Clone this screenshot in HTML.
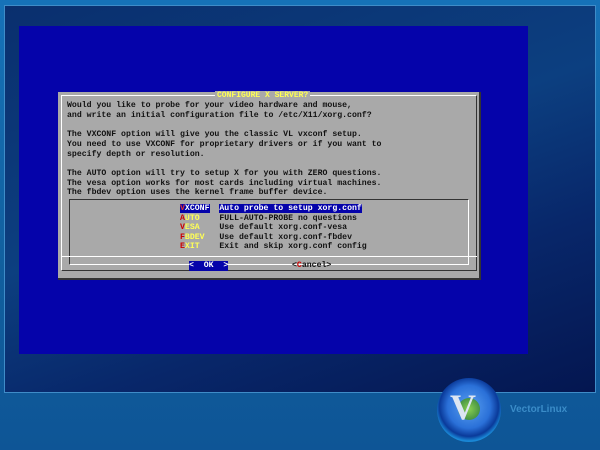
<!DOCTYPE html>
<html><head><style>
body{margin:0;width:600px;height:450px;overflow:hidden;background:linear-gradient(180deg,#1672b8 0%,#115f9e 60%,#0e5596 100%);position:relative;font-family:"Liberation Mono",monospace;}
.frame{position:absolute;left:4px;top:5px;width:590px;height:386px;border:1px solid #3f8cc8;background:linear-gradient(160deg,#0a2f6e 0%,#0c3f80 45%,#08276a 70%,#041650 100%);}
.scr{position:absolute;left:19px;top:26px;width:509px;height:328px;background:#0503aa;}
.dlg{position:absolute;left:58px;top:92px;width:421px;height:186px;background:#a9a9a9;border-right:2px solid #333;border-bottom:2px solid #333;}
.t{position:absolute;font-size:8.2px;font-weight:bold;color:#111;white-space:pre;line-height:9.7px;}
.ob{position:absolute;border:1px solid #fff;border-right-color:#333;border-bottom-color:#333;}
.title{position:absolute;left:157px;top:-1px;color:#ffff55;background:#a9a9a9;font-size:8px;font-weight:bold;padding:0 2px;}
.y{color:#ffff55}.r{color:#c00}
</style></head><body>
<div class="frame"></div>
<div class="scr"></div>
<div class="dlg">
 <div class="ob" style="left:3px;top:3px;width:414px;height:174px;"></div>
 <div class="title">CONFIGURE X SERVER?</div>
 <div class="t" style="left:9px;top:9px">Would you like to probe for your video hardware and mouse,
and write an initial configuration file to /etc/X11/xorg.conf?

The VXCONF option will give you the classic VL vxconf setup.
You need to use VXCONF for proprietary drivers or if you want to
specify depth or resolution.

The AUTO option will try to setup X for you with ZERO questions.
The vesa option works for most cards including virtual machines.
The fbdev option uses the kernel frame buffer device.</div>
 <div class="ob" style="left:11px;top:107px;width:398px;height:64px;border-color:#333 #fff #fff #333"></div>
 <div style="position:absolute;left:3px;top:164px;width:416px;border-top:1px solid #fff"></div>
 <div class="t" style="left:122px;top:112px;line-height:9.5px"><span style="background:#0503aa;color:#fff"><span style="color:#e03030">V</span>XCONF</span>  <span style="background:#0503aa;color:#fff">Auto probe to setup xorg.conf</span>
<span class="r">A</span><span class="y">UTO</span>    FULL-AUTO-PROBE no questions
<span class="r">V</span><span class="y">ESA</span>    Use default xorg.conf-vesa
<span class="r">F</span><span class="y">BDEV</span>   Use default xorg.conf-fbdev
<span class="r">E</span><span class="y">XIT</span>    Exit and skip xorg.conf config</div>
 <div class="t" style="left:131px;top:169px;background:#0503aa;color:#fff">&lt;  OK  &gt;</div>
 <div class="t" style="left:234px;top:169px">&lt;<span class="r">C</span>ancel&gt;</div>
</div>
<div style="position:absolute;left:437px;top:378px;width:64px;height:64px;border-radius:50%;background:radial-gradient(circle at 50% 45%,#5aa0f0 0%,#2a70d8 45%,#0a3a9a 62%,#1a8ad8 72%,#0a4a90 100%);"></div>
<div style="position:absolute;left:458px;top:398px;width:22px;height:22px;border-radius:50%;background:radial-gradient(circle,#8ad050,#2a7a40);"></div>
<div style="position:absolute;left:450px;top:386px;font:bold 36px 'Liberation Serif',serif;color:#dde6f2;">V</div>
<div style="position:absolute;left:510px;top:404px;font:bold 10px 'Liberation Sans',sans-serif;color:#3a8cc8;">VectorLinux</div>
</body></html>
